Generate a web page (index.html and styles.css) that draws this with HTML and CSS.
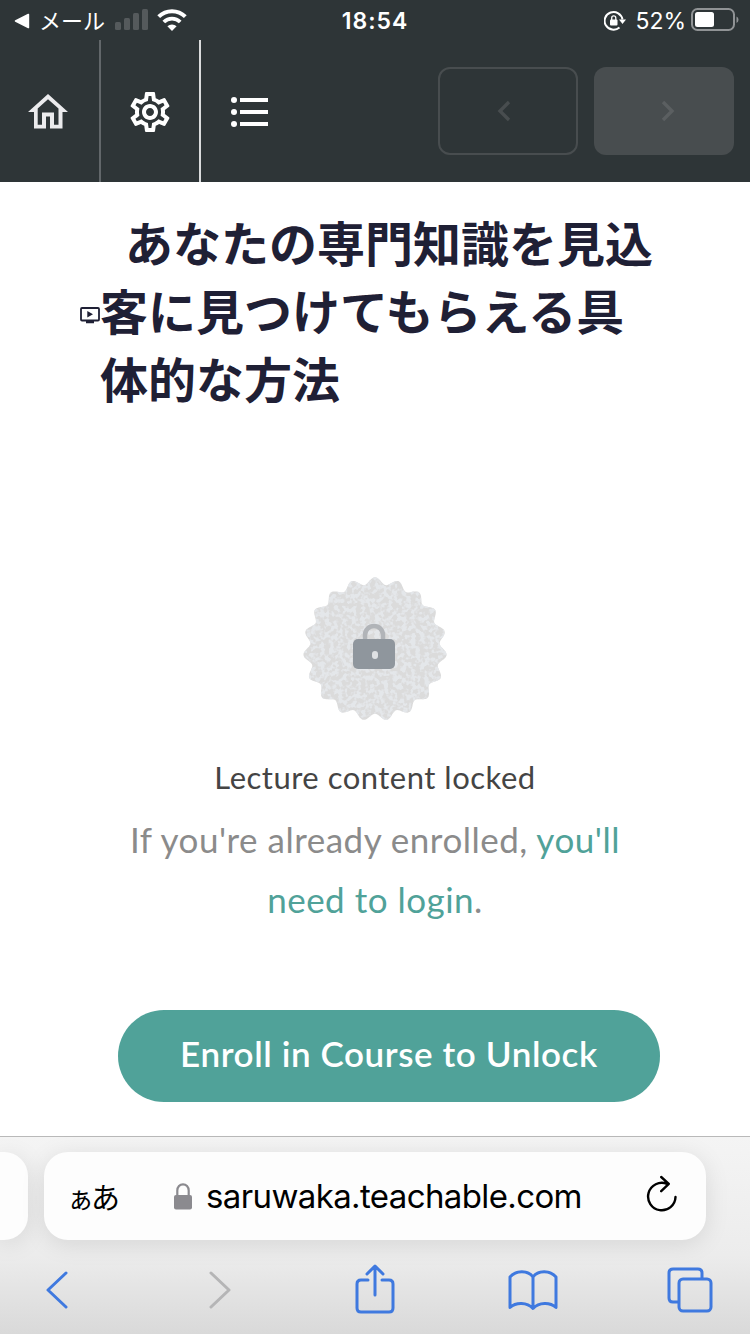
FILE: index.html
```html
<!DOCTYPE html>
<html lang="ja">
<head>
<meta charset="UTF-8">
<meta name="viewport" content="width=device-width, initial-scale=1.0">
<title>Lecture</title>
<link rel="stylesheet" href="styles.css">
</head>
<body>

<div class="status-bar">
    <div class="status-left">
        <svg class="back-app" width="16" height="16" viewBox="0 0 16 16"><path d="M1.2 7.2 14 .8q1.2-.4 1.2.8v12.8q0 1.2-1.2.8L1.2 8.8q-1.200-.8 0-1.600z" fill="#fff"/></svg>
        <span class="mail">メール</span>
        <svg class="signal" width="34" height="22" viewBox="0 0 34 22" fill="#555a5c">
            <rect x="0" y="13" width="6" height="8" rx="1.500"/>
            <rect x="9" y="9" width="6" height="12" rx="1.500"/>
            <rect x="18" y="4" width="6" height="17" rx="1.500"/>
            <rect x="27" y="0" width="6" height="21" rx="1.500"/>
        </svg>
        <svg class="wifi" width="30" height="22" viewBox="0 0 30 22" fill="none" stroke="#fff">
            <path d="M1.700 7.600a19 19 0 0 1 26.600 0" stroke-width="4"/>
            <path d="M6.800 13a11.700 11.700 0 0 1 16.400 0" stroke-width="3.800"/>
            <path d="M15 22l-4.600-4.700a6.500 6.500 0 0 1 9.200 0z" fill="#fff" stroke="none"/>
        </svg>
    </div>
    <div class="time">18:54</div>
    <div class="status-right">
        <svg width="22" height="20" viewBox="0 0 22 20" fill="none">
            <path d="M18.500 8.500A9 8.800 0 1 0 15.500 16.500" stroke="#fff" stroke-width="2"/>
            <path d="M15 8.400h7l-3.500 4.600z" fill="#fff"/>
            <rect x="6" y="8.500" width="7.500" height="6" rx="1" fill="#fff"/>
            <path d="M7.700 9V7a2 2 0 0 1 4.100 0v2" stroke="#fff" stroke-width="1.300"/>
        </svg>
        <span class="percent">52%</span>
        <svg width="48" height="24" viewBox="0 0 48 24" fill="none">
            <rect x="1" y="1" width="42" height="21" rx="5.500" stroke="#909395" stroke-width="2"/>
            <rect x="4" y="4" width="19" height="15" rx="2.500" fill="#fff"/>
            <path d="M45.500 8.500q2 .8 2 3.200t-2 3.200z" fill="#909395"/>
        </svg>
    </div>
</div>

<nav class="navbar">
    <a class="nav-item nav-home">
        <svg width="40" height="36" viewBox="0 0 40 36" fill="#ebebed" fill-rule="evenodd"><path d="M20 0 40 18H34.500V34.500H22V22.500H18V34.500H6V18H0zM20 5.300 9.700 14.600V30.700H14V18.500H26V30.700H30.500V14.600z"/></svg>
    </a>
    <a class="nav-item nav-settings">
        <svg width="48" height="48" viewBox="0 0 24 24" fill="#fff"><path d="M19.430 12.980c.040-.32.070-.64.070-.98 0-.34-.030-.66-.070-.98l2.110-1.650c.190-.15.240-.42.120-.64l-2-3.460c-.09-.16-.26-.25-.44-.25-.06 0-.12.010-.17.030l-2.490 1c-.52-.4-1.080-.73-1.690-.98l-.38-2.650C14.460 2.180 14.250 2 14 2h-4c-.25 0-.46.180-.49.420l-.38 2.650c-.61.250-1.170.590-1.690.980l-2.490-1c-.06-.02-.12-.03-.18-.03-.17 0-.34.090-.43.250l-2 3.460c-.13.220-.07.490.120.640l2.110 1.650c-.04.320-.07.650-.07.980 0 .330.030.660.070.980l-2.110 1.650c-.19.150-.24.420-.12.640l2 3.460c.09.160.260.250.440.250.060 0 .120-.01.170-.03l2.490-1c.52.400 1.080.730 1.690.980l.38 2.650c.03.240.240.420.490.420h4c.25 0 .46-.18.490-.42l.38-2.650c.61-.25 1.170-.59 1.690-.98l2.490 1c.06.020.120.030.180.030.170 0 .340-.09.430-.25l2-3.460c.12-.22.070-.49-.12-.64l-2.110-1.650zm-1.980-1.710c.04.310.050.520.050.730 0 .210-.02.430-.05.730l-.14 1.130.89.700 1.080.840-.7 1.210-1.270-.51-1.040-.42-.9.680c-.43.320-.84.560-1.250.730l-1.060.430-.16 1.130-.2 1.350h-1.400l-.19-1.350-.16-1.130-1.060-.43c-.43-.18-.83-.41-1.230-.71l-.91-.7-1.060.43-1.270.51-.7-1.210 1.080-.84.890-.7-.14-1.130c-.03-.31-.05-.54-.05-.74s.02-.43.050-.73l.14-1.130-.89-.7-1.080-.84.700-1.210 1.270.510 1.040.420.900-.68c.43-.32.840-.56 1.250-.73l1.060-.43.160-1.130.200-1.350h1.390l.19 1.350.160 1.130 1.060.430c.43.180.830.410 1.230.710l.91.700 1.060-.43 1.270-.51.700 1.210-1.070.850-.89.700.140 1.130zM12 8c-2.210 0-4 1.790-4 4s1.790 4 4 4 4-1.790 4-4-1.790-4-4-4zm0 6c-1.100 0-2-.9-2-2s.9-2 2-2 2 .9 2 2-.9 2-2 2z"/></svg>
    </a>
    <a class="nav-item nav-list">
        <svg width="38" height="32" viewBox="0 0 38 32" fill="#fff">
            <circle cx="3" cy="4" r="3"/><circle cx="3" cy="16" r="3"/><circle cx="3" cy="28" r="3"/>
            <path d="M9 2h28v4H9zM9 14h28v4H9zM9 26h28v4H9z"/>
        </svg>
    </a>
    <div class="nav-buttons">
        <button class="nav-btn prev">
            <svg width="14" height="22" viewBox="0 0 14 22"><path d="M12 2 3 11l9 9" fill="none" stroke="#484d4f" stroke-width="3.400"/></svg>
        </button>
        <button class="nav-btn next">
            <svg width="14" height="22" viewBox="0 0 14 22"><path d="M2 2l9 9-9 9" fill="none" stroke="#5b5f61" stroke-width="3.400"/></svg>
        </button>
    </div>
</nav>

<main class="content">
    <div class="lecture-heading">
        <svg class="video-icon" width="20" height="17" viewBox="0 0 20 17"><rect x="1" y="1" width="18" height="12.500" rx="1" fill="none" stroke="#1f2035" stroke-width="1.800"/><path d="M7.300 4v6.600L13 7.300zM6 14h8v2.300H6z" fill="#1f2035"/></svg>
        <h2>あなたの専門知識を見込<br>客に見つけてもらえる具<br>体的な方法</h2>
    </div>

    <div class="locked">
        <svg class="badge" width="146" height="146" viewBox="-73 -73 146 146">
            <defs>
                <filter id="grain" x="0" y="0" width="1" height="1" color-interpolation-filters="sRGB">
                    <feTurbulence type="fractalNoise" baseFrequency="0.22" numOctaves="2" seed="4"/>
                    <feColorMatrix values="0 0 0 0 .895  0 0 0 0 .905  0 0 0 0 .918  6 0 0 0 -2.600"/>
                    <feComposite in2="SourceGraphic" operator="in"/>
                </filter>
            </defs>
            <path class="seal" fill="#dbdbdb"/>
            <path class="seal" fill="#fff" filter="url(#grain)"/>
            <path d="M-10-9v-5a9 9 0 0 1 18 0v5" fill="none" stroke="#b1b4b8" stroke-width="4.500"/>
            <rect x="-22" y="-10" width="42" height="30" rx="5" fill="#8f969d"/>
            <rect x="-3" y="2" width="6" height="8" rx="3" fill="#dfe1e4"/>
        </svg>
        <h3>Lecture content locked</h3>
        <p>If you're already enrolled, <a>you'll<br>need to login</a>.</p>
        <button class="enroll">Enroll in Course to Unlock</button>
    </div>
</main>

<footer class="browser-bar">
    <div class="tabs">
        <div class="prev-tab"></div>
        <div class="address">
            <span class="reader"><small>ぁ</small>あ</span>
            <svg class="lock" width="18" height="27" viewBox="0 0 18 27"><rect x="0" y="12" width="18" height="14.500" rx="2" fill="#8b8a8f"/><path d="M3.300 13V7.500a5.700 6.200 0 0 1 11.400 0V13" fill="none" stroke="#8b8a8f" stroke-width="2.200"/></svg>
            <span class="url">saruwaka.teachable.com</span>
            <svg class="reload" width="32" height="38" viewBox="0 0 32 38" fill="none" stroke="#000" stroke-width="2.400" stroke-linecap="round" stroke-linejoin="round"><path d="M21 8.900A13.700 13.700 0 1 0 29.500 22M15.200 2l7.600 6.800-7.600 7.400"/></svg>
        </div>
    </div>
    <div class="toolbar">
        <svg class="back" width="22" height="38" viewBox="0 0 22 38"><path d="M20 2 2 19l18 17"/></svg>
        <svg class="forward" width="22" height="38" viewBox="0 0 22 38"><path d="M2 2l18 17L2 36"/></svg>
        <svg class="share" width="40" height="50" viewBox="0 0 40 50"><path d="M13 16H6q-4 0-4 4v24q0 4 4 4h28q4 0 4-4V20q0-4-4-4h-7M20 31V3M12 10l8-8 8 8"/></svg>
        <svg class="book" width="50" height="42" viewBox="0 0 50 42"><path d="M25 8C20 1 8 1 2 8v30.500c6-5.500 17-5.500 23 1 6-6.500 17-6.500 23-1V8C42 1 30 1 25 8zM25 8v31"/></svg>
        <svg class="pages" width="46" height="46" viewBox="0 0 46 46"><path d="M11 35H6q-4 0-4-4V6q0-4 4-4h25q4 0 4 4v5"/><rect x="12" y="12" width="32" height="32" rx="4"/></svg>
    </div>
</footer>

<script>
    // wavy edge of the seal
    const points = [];
    for (let deg = 0; deg < 360; deg++) {
        const a = deg * Math.PI / 180;
        const r = 68.3 + 3.5 * Math.cos(19 * a);
        points.push((r * Math.sin(a)).toFixed(2) + ' ' + (-r * Math.cos(a)).toFixed(2));
    }
    document.querySelectorAll('.seal').forEach(seal => {
        seal.setAttribute('d', 'M' + points.join('L') + 'z');
    });
</script>

</body>
</html>
```
FILE: styles.css
```css
* {
    box-sizing: border-box;
}

body {
    margin: 0;
    width: 750px;
    height: 1334px;
    display: flex;
    flex-direction: column;
    overflow: hidden;
    background-color: #fff;
    font-family: Lato, "Noto Sans CJK JP", sans-serif;
}

svg {
    display: block;
    flex: none;
}

button {
    border: none;
    padding: 0;
    font-family: inherit;
}

/* status bar */
.status-bar {
    display: grid;
    grid-template-columns: 1fr auto 1fr;
    align-items: center;
    height: 40px;
    padding: 0 11px 0 14px;
    background-color: #2e3537;
    color: #fff;
    font-family: Inter, "Noto Sans CJK JP", sans-serif;
    font-size: 24px;
    line-height: 40px;
}

.status-left,
.status-right {
    display: flex;
    align-items: center;
}

.status-right {
    justify-content: flex-end;
}

.mail {
    margin-left: 9px;
    width: 76px;
    font-size: 22px;
    font-weight: 400;
}

.signal {
    margin-top: -2px;
}

.wifi {
    margin-top: -1px;
    margin-left: 8px;
}

.time {
    margin-right: 3px;
    padding-top: 1px;
    font-weight: 600;
    font-size: 23px;
    letter-spacing: 1px;
}

.percent {
    margin: 1px 5px 0 9px;
    font-size: 23px;
}

.percent + svg {
    margin-top: -2px;
}

/* course navigation */
.navbar {
    display: flex;
    height: 142px;
    background-color: #2e3537;
}

.nav-item {
    display: flex;
    align-items: center;
    justify-content: center;
    width: 100px;
    padding-top: 2px;
}

.nav-home {
    width: 101px;
    padding-right: 4px;
    border-right: 2px solid #62676a;
}

.nav-settings {
    border-right: 2px solid #dadbdc;
}

.nav-list {
    padding-right: 2px;
}

.nav-buttons {
    display: flex;
    gap: 16px;
    margin: 27px 16px 0 auto;
}

.nav-btn {
    display: flex;
    align-items: center;
    justify-content: center;
    width: 140px;
    height: 88px;
    border-radius: 12px;
}

.prev {
    background: none;
    border: 2px solid #484d4f;
    padding-right: 8px;
}

.next {
    background-color: #484d4f;
    padding-left: 8px;
}

/* lecture */
.content {
    flex: 1;
}

.lecture-heading {
    display: flex;
    align-items: center;
    padding: 25px 0 0 80px;
}

.lecture-heading h2 {
    margin: 0;
    color: #1f2035;
    font-family: "Noto Sans CJK JP", sans-serif;
    font-size: 48px;
    font-weight: bold;
    line-height: 68px;
    text-indent: 25px;
    white-space: nowrap;
}

.video-icon {
    margin-top: 13px;
}

.locked {
    display: flex;
    flex-direction: column;
    align-items: center;
    padding-top: 165px;
    text-align: center;
}

.locked h3 {
    margin: 33px 0 0;
    color: #444;
    font-size: 31px;
    font-weight: 400;
    line-height: 44px;
    letter-spacing: 0.5px;
}

.locked p {
    margin: 10px 0 0;
    color: #8b8b8b;
    font-size: 35px;
    line-height: 60px;
    letter-spacing: 0.5px;
}

.locked a {
    color: #50a299;
}

.enroll {
    width: 542px;
    height: 92px;
    margin: 81px 0 0 28px;
    padding-bottom: 6px;
    border-radius: 46px;
    background-color: #50a299;
    color: #fff;
    font-size: 35px;
    font-weight: 600;
    letter-spacing: 0.6px;
}

/* browser controls */
.browser-bar {
    height: 198px;
    border-top: 1px solid #b9b9b9;
    background: linear-gradient(#f4f4f4, #ececec 60%, #d9d9d9);
}

.tabs {
    display: flex;
    gap: 16px;
    padding-top: 15px;
}

.prev-tab {
    width: 28px;
    height: 88px;
    border-radius: 0 24px 24px 0;
    background-color: #fdfdfd;
    box-shadow: 0 4px 24px rgba(0, 0, 0, 0.1);
}

.address {
    display: flex;
    align-items: center;
    width: 662px;
    height: 88px;
    padding: 0 28px 0 23px;
    border-radius: 24px;
    background-color: #fdfdfd;
    box-shadow: 0 4px 24px rgba(0, 0, 0, 0.1);
}

.reader {
    width: 107px;
    font-family: "Noto Sans CJK JP", sans-serif;
    font-size: 29px;
    font-weight: 400;
    white-space: nowrap;
}

.reader small {
    font-size: 27px;
    letter-spacing: -3px;
}

.url {
    margin-left: 14px;
    font-family: Inter, sans-serif;
    font-size: 33px;
    letter-spacing: -0.620px;
}

.reload {
    margin-left: auto;
    margin-top: -4px;
}

.toolbar {
    display: flex;
    align-items: center;
    height: 94px;
    padding: 6px 37px 0 46px;
}

.toolbar svg {
    fill: none;
    stroke: #3f79df;
    stroke-width: 3;
    stroke-linecap: round;
    stroke-linejoin: round;
}

.toolbar .forward {
    margin-left: 141px;
    stroke: #b5b5b6;
}

.share {
    margin-left: 124px;
    margin-top: -2px;
}

.book {
    margin-left: 113px;
}

.pages {
    margin-left: auto;
}
```
